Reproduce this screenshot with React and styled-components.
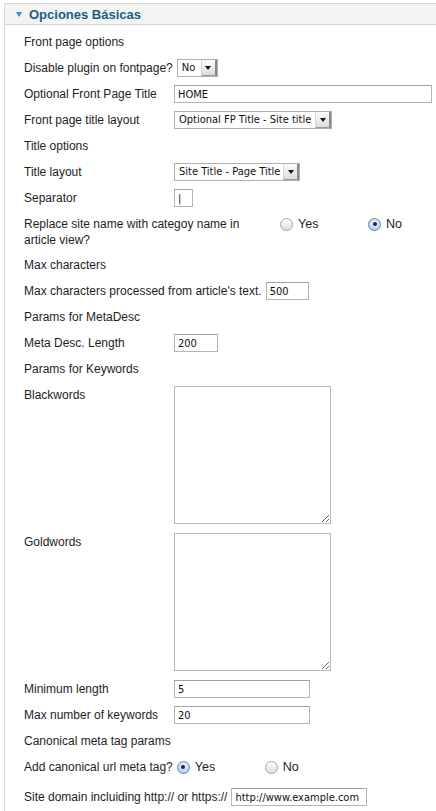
import React from 'react';
import styled, { createGlobalStyle } from 'styled-components';

const GlobalStyle = createGlobalStyle`
  html, body {
    margin: 0;
    padding: 0;
    background: #fff;
    overflow: hidden;
  }
  body {
    font-family: "Liberation Sans", Arial, sans-serif;
    font-size: 12px;
    color: #1e1e1e;
  }
`

const Panel = styled.div`
  margin-left: 4px;
  min-height: 100vh;
  border-left: 1px solid #d9d9d9;
`

const Header = styled.div`
  margin-top: 3px;
  height: 20px;
  border-top: 1px solid #d4d4d4;
  border-bottom: 1px solid #d4d4d4;
  background: #f3f3f3;
  display: flex;
  align-items: center;
  padding-left: 11px;
  gap: 7px;
`

const Arrow = styled.span`
  width: 0;
  height: 0;
  border-left: 3.5px solid transparent;
  border-right: 3.5px solid transparent;
  border-top: 5px solid #3a8cc4;
`

const Title = styled.h3`
  margin: 0;
  font-size: 13px;
  font-weight: bold;
  color: #195e86;
`

const Body = styled.div`
  padding: 4px 0 0 19px;
`

const Row = styled.div`
  display: flex;
  align-items: flex-start;
  padding: 4px 0;
  min-height: 18px;
  margin-top: ${p => p.$top || 0}px;
`

const Label = styled.label`
  flex: 0 0 auto;
  box-sizing: border-box;
  min-width: 150px;
  padding: 1px 4px 0 0;
  line-height: 16px;
  white-space: nowrap;
`

const WrapLabel = styled(Label)`
  width: 226px;
  white-space: normal;
`

const Heading = styled.div`
  padding-top: 1px;
  line-height: 16px;
`

const fieldFont = `"DejaVu Sans Condensed", "DejaVu Sans", sans-serif`

const TextInput = styled.input`
  box-sizing: border-box;
  width: ${p => p.$w}px;
  height: 18px;
  margin: 0;
  padding: 0 3px;
  border: 1px solid #b5b5b5;
  border-top-color: #a0a0a0;
  background: #fff;
  font-family: ${fieldFont};
  font-size: 11px;
  color: #111;
  outline: none;
`

const TextArea = styled.textarea`
  display: block;
  box-sizing: border-box;
  width: 157px;
  height: 138px;
  margin: 0 0 1px;
  border: 1px solid #b8b8b8;
  background: #fff;
  outline: none;
`

const SelectBox = styled.div`
  display: inline-flex;
  box-sizing: border-box;
  width: ${p => p.$w}px;
  height: 18px;
  border: 1px solid #b0b0b0;
  background: #fff;
  font-family: ${fieldFont};
  font-size: 11px;
  color: #111;
`

const SelectText = styled.span`
  flex: 1;
  padding-left: 4px;
  line-height: 16px;
  white-space: nowrap;
  overflow: hidden;
`

const SelectButton = styled.span`
  width: 13px;
  display: flex;
  align-items: center;
  justify-content: center;
  background: linear-gradient(#fdfdfd, #dcdcdc);
  border-left: 1px solid #d8d8d8;
  border-right: 2px solid #8a8a8a;
  border-bottom: 1px solid #9a9a9a;

  &::after {
    content: '';
    width: 0;
    height: 0;
    border-left: 3px solid transparent;
    border-right: 3px solid transparent;
    border-top: 4px solid #111;
  }
`

const RadioGroup = styled.div`
  display: flex;
  margin-left: ${p => p.$left || 0}px;
`

const RadioOption = styled.label`
  width: 88px;
  display: flex;
  align-items: center;
  gap: 5px;
  height: 18px;
  font-size: 12.5px;
`

const RadioDot = styled.span`
  width: 13px;
  height: 13px;
  box-sizing: border-box;
  border-radius: 50%;
  border: 1px solid ${p => (p.$on ? '#5d87b3' : '#a3a3a3')};
  background: ${p =>
    p.$on
      ? 'radial-gradient(circle at 50% 35%, #f2f8fe 0%, #b7d3ee 70%, #8fb6de 100%)'
      : 'linear-gradient(#ffffff, #dedede)'};
  display: inline-flex;
  align-items: center;
  justify-content: center;

  &::after {
    content: '';
    display: ${p => (p.$on ? 'block' : 'none')};
    width: 4px;
    height: 4px;
    border-radius: 50%;
    background: #1c2837;
  }
`

const Select = ({ w, value }) => (
  <SelectBox $w={w}>
    <SelectText>{value}</SelectText>
    <SelectButton />
  </SelectBox>
)

const Radios = ({ value, left }) => (
  <RadioGroup $left={left}>
    <RadioOption><RadioDot $on={value === 'yes'} />Yes</RadioOption>
    <RadioOption><RadioDot $on={value === 'no'} />No</RadioOption>
  </RadioGroup>
)

export default function App() {
  return (
    <>
      <GlobalStyle />
      <Panel>
        <Header>
          <Arrow />
          <Title>Opciones Básicas</Title>
        </Header>
        <Body>
          <Row><Heading>Front page options</Heading></Row>
          <Row>
            <Label>Disable plugin on fontpage?</Label>
            <Select w={41} value="No" />
          </Row>
          <Row>
            <Label>Optional Front Page Title</Label>
            <TextInput $w={258} defaultValue="HOME" />
          </Row>
          <Row>
            <Label>Front page title layout</Label>
            <Select w={158} value="Optional FP Title - Site title" />
          </Row>
          <Row><Heading>Title options</Heading></Row>
          <Row>
            <Label>Title layout</Label>
            <Select w={126} value="Site Title - Page Title" />
          </Row>
          <Row>
            <Label>Separator</Label>
            <TextInput $w={19} defaultValue="|" />
          </Row>
          <Row>
            <WrapLabel>Replace site name with categoy name in article view?</WrapLabel>
            <Radios value="no" left={30} />
          </Row>
          <Row><Heading>Max characters</Heading></Row>
          <Row>
            <Label>Max characters processed from article's text.</Label>
            <TextInput $w={43} defaultValue="500" />
          </Row>
          <Row><Heading>Params for MetaDesc</Heading></Row>
          <Row>
            <Label>Meta Desc. Length</Label>
            <TextInput $w={44} defaultValue="200" />
          </Row>
          <Row><Heading>Params for Keywords</Heading></Row>
          <Row>
            <Label>Blackwords</Label>
            <TextArea />
          </Row>
          <Row>
            <Label>Goldwords</Label>
            <TextArea />
          </Row>
          <Row>
            <Label>Minimum length</Label>
            <TextInput $w={136} defaultValue="5" />
          </Row>
          <Row>
            <Label>Max number of keywords</Label>
            <TextInput $w={136} defaultValue="20" />
          </Row>
          <Row><Heading>Canonical meta tag params</Heading></Row>
          <Row>
            <Label>Add canonical url meta tag?</Label>
            <Radios value="yes" />
          </Row>
          <Row $top={4}>
            <Label>Site domain incluiding http:// or https://</Label>
            <TextInput $w={136} defaultValue="http://www.example.com" />
          </Row>
        </Body>
      </Panel>
    </>
  );
}
